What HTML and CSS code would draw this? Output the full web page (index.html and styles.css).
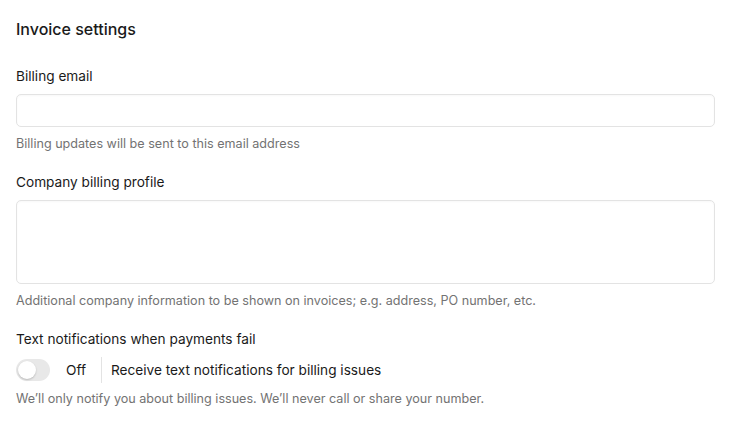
FILE: index.html
```html
<!DOCTYPE html>
<html lang="en">
<head>
  <meta charset="UTF-8">
  <meta name="viewport" content="width=device-width, initial-scale=1.0">
  <title>Invoice settings</title>
<link rel="stylesheet" href="styles.css">
</head>
<body>
  <div class="settings">
    <h3 class="title">Invoice settings</h3>

    <div class="field">
      <label class="label" for="billing-email">Billing email</label>
      <input class="input" id="billing-email" type="email">
      <p class="hint">Billing updates will be sent to this email address</p>
    </div>

    <div class="field">
      <label class="label" for="billing-profile">Company billing profile</label>
      <textarea class="input textarea" id="billing-profile"></textarea>
      <p class="hint">Additional company information to be shown on invoices; e.g. address, PO number, etc.</p>
    </div>

    <div class="field">
      <span class="label">Text notifications when payments fail</span>
      <div class="switch-row">
        <span class="switch"><span class="thumb"></span></span>
        <span class="state">Off</span>
        <span class="switch-desc">Receive text notifications for billing issues</span>
      </div>
      <p class="hint">We’ll only notify you about billing issues. We’ll never call or share your number.</p>
    </div>
  </div>
</body>
</html>
```

FILE: styles.css
```css
html, body {
  margin: 0;
  background: #fff;
}
body {
  font-family: Inter, "Liberation Sans", sans-serif;
  color: #1a1a1a;
}
.settings {
  padding: 19px 15px 0 16px;
}
.title {
  margin: 0 0 27px;
  font-size: 16px;
  font-weight: 550;
  line-height: 20px;
}
.field {
  display: flex;
  flex-direction: column;
  margin-bottom: 19px;
}
.label {
  font-size: 13.65px;
  line-height: 20px;
  margin-bottom: 8px;
}
.input {
  box-sizing: border-box;
  height: 33px;
  border: 1px solid #e3e3e3;
  border-radius: 5px;
  background: #fff;
  box-shadow: inset 0 1px 2px rgba(0, 0, 0, 0.03);
  font: inherit;
  outline: none;
  margin: 0;
}
.textarea {
  height: 84px;
  resize: none;
  display: block;
}
.hint {
  margin: 8px 0 0;
  font-size: 12.6px;
  line-height: 18px;
  color: #737373;
}
.switch-row {
  display: flex;
  align-items: center;
  height: 24px;
  margin-top: 1px;
  font-size: 13.65px;
}
.switch {
  box-sizing: border-box;
  width: 34px;
  height: 22px;
  border-radius: 11px;
  background: #e8e8e8;
  padding: 2px;
  display: flex;
}
.thumb {
  width: 18px;
  height: 18px;
  border-radius: 50%;
  background: #fff;
  box-shadow: 0 1px 2px rgba(0, 0, 0, 0.2);
}
.state {
  margin-left: 16px;
  padding-right: 15px;
  border-right: 1px solid #e3e3e3;
  line-height: 26px;
}
.switch-desc {
  margin-left: 9px;
}
```
